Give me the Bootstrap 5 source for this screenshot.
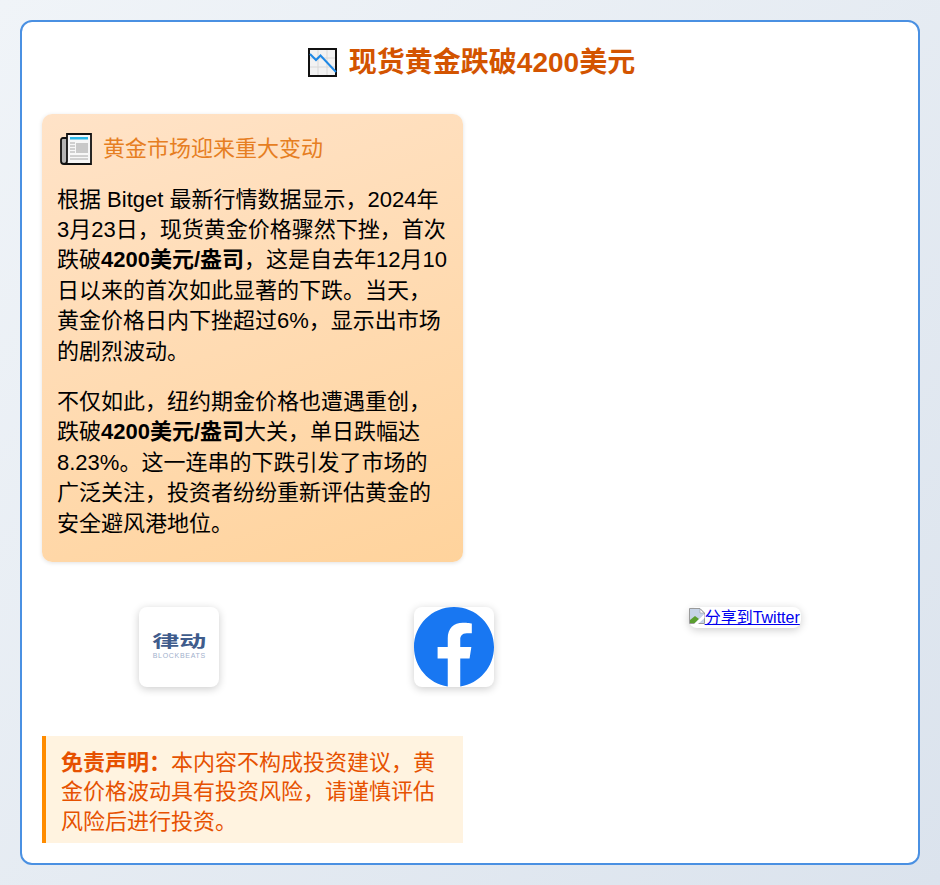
<!DOCTYPE html>
<html lang="zh-CN">
<head>
  <meta charset="UTF-8">
  <title>现货黄金跌破4200美元</title>
  <link href="https://cdn.jsdelivr.net/npm/bootstrap@5.3.3/dist/css/bootstrap.min.css" rel="stylesheet">
  <style>
    body {
      font-family: "Liberation Sans", "Noto Sans CJK SC", sans-serif;
      color: #000;
      min-height: 885px;
      padding: 20px;
      background: linear-gradient(135deg, #f0f4f8, #dbe3ed);
    }
    .news-box {
      border: 2px solid #4a90e2;
      border-radius: 12px;
      padding: 20px;
      height: 845px;
    }
    .news-title {
      font-size: 28px;
      font-weight: 700;
      line-height: 1.2;
      color: #d35400;
      margin: 4px 0 34px;
      padding-left: 3px;
      gap: 12px;
    }
    .info-panel {
      width: 421px;
      height: 448px;
      padding: 15px;
      border-radius: 10px;
      background: linear-gradient(160deg, #ffe3c8, #ffd39c);
      box-shadow: 0 1px 4px rgba(0, 0, 0, .12);
    }
    .panel-head {
      font-size: 22px;
      line-height: 1.2;
      color: #e67e22;
      gap: 11px;
      margin: 4px 0 20px 3px;
    }
    .panel-head span { padding-top: 2px; }
    .info-panel p {
      font-size: 22px;
      line-height: 30.4px;
      margin-bottom: 20px;
    }
    .logo-row { margin: 45px 0 49px; height: 80px; }
    .logo-tile {
      width: 80px;
      height: 80px;
      border-radius: 8px;
      background: #fff;
      box-shadow: 0 2px 8px rgba(0, 0, 0, .2);
      overflow: hidden;
    }
    .logo-cn {
      font-size: 27px;
      line-height: 17px;
      font-weight: 700;
      color: #3f5c8c;
      transform: scaleY(.6);
    }
    .logo-en {
      font-size: 7px;
      line-height: 8px;
      color: #9fb0cc;
      letter-spacing: .7px;
      margin-top: 2px;
    }
    .share-link {
      width: 112px;
      height: 21px;
      font-size: 16px;
      line-height: 22px;
      color: #00e;
      border-radius: 8px;
      background: #fff;
      box-shadow: 0 2px 8px rgba(0, 0, 0, .2);
      text-decoration: underline;
      white-space: nowrap;
    }
    .share-link svg { vertical-align: -1px; }
    .disclaimer {
      width: 421px;
      height: 107px;
      padding: 12px 14px 12px 15px;
      font-size: 22px;
      line-height: 29.5px;
      color: #e65100;
      background: #fff3e0;
      border-left: 4px solid #ff8c00;
    }
  </style>
  <script src="https://cdn.jsdelivr.net/npm/bootstrap@5.3.3/dist/js/bootstrap.bundle.min.js"></script>
</head>
<body>
  <div class="news-box bg-white">
    <h1 class="news-title d-flex justify-content-center align-items-center">
      <svg width="29" height="29" viewBox="0 0 29 29" aria-hidden="true">
        <rect x="1" y="1" width="27" height="27" fill="#f2f2f2" stroke="#111" stroke-width="2"/>
        <path d="M10 2v25M19 2v25M2 10h25M2 19h25" stroke="#d8d8d8" stroke-width="1"/>
        <path d="M2 6l6 6 4.500-4.500L28 24" fill="none" stroke="#1e88e5" stroke-width="2"/>
      </svg>
      <span>现货黄金跌破4200美元</span>
    </h1>

    <div class="info-panel">
      <h2 class="panel-head d-flex align-items-center fw-normal">
        <svg width="32" height="32" viewBox="0 0 32 32" aria-hidden="true">
          <path d="M6 5H3C1.800 5 1 6 1 7v21c0 2 1.500 3 3 3h26V5z" fill="#b5b5b5" stroke="#111" stroke-width="1.800"/>
          <path d="M7 1h24v30H4c2 0 3-1 3-3z" fill="#f7f7f7" stroke="#111" stroke-width="1.800"/>
          <rect x="10" y="4" width="18" height="2.500" fill="#29b6e8"/>
          <rect x="16" y="10" width="12" height="10" fill="#c9c9c9"/>
          <path d="M10 10h5M10 13h5M10 16h5M10 19h5M10 23h18M10 26h18" stroke="#a8a8a8" stroke-width="1"/>
        </svg>
        <span>黄金市场迎来重大变动</span>
      </h2>
      <p>根据 Bitget 最新行情数据显示，2024年3月23日，现货黄金价格骤然下挫，首次跌破<strong>4200美元/盎司</strong>，这是自去年12月10日以来的首次如此显著的下跌。当天，黄金价格日内下挫超过6%，显示出市场的剧烈波动。</p>
      <p>不仅如此，纽约期金价格也遭遇重创，跌破<strong>4200美元/盎司</strong>大关，单日跌幅达8.23%。这一连串的下跌引发了市场的广泛关注，投资者纷纷重新评估黄金的安全避风港地位。</p>
    </div>

    <div class="logo-row d-flex justify-content-around align-items-start">
      <div class="logo-tile d-flex flex-column align-items-center justify-content-center">
        <div class="logo-cn">律动</div>
        <div class="logo-en">BLOCKBEATS</div>
      </div>
      <div class="logo-tile">
        <svg width="80" height="80" viewBox="0 0 1024 1024" aria-label="Facebook">
          <path fill="#1877f2" d="M1024 512C1024 229.2 794.8 0 512 0S0 229.2 0 512c0 255.600 187.200 467.400 432 505.800V660H302V512h130V399.200C432 270.900 508.400 200 625.400 200c56 0 114.600 10 114.600 10v126h-64.600c-63.600 0-83.400 39.500-83.400 80v96h142l-22.700 148H592v357.800C836.800 979.400 1024 767.600 1024 512z"/>
        </svg>
      </div>
      <a class="share-link d-inline-block" href="#"><svg width="16" height="16" viewBox="0 0 16 16" aria-hidden="true">
          <path d="M.5.5h10.500l4.500 4.500v10.500H.5z" fill="#c5d3e6" stroke="#9a9a9a"/>
          <path d="M1 15v-3l5-4 4 3-4 4z" fill="#5a9e2f"/>
          <path d="M11 1v4h4z" fill="#fff" stroke="#9a9a9a" stroke-width=".6"/>
          <path d="M15.500 6L5 16h4l6.500-6z" fill="#fff"/>
        </svg>分享到Twitter</a>
    </div>

    <div class="disclaimer"><strong>免责声明：</strong>本内容不构成投资建议，黄金价格波动具有投资风险，请谨慎评估风险后进行投资。</div>
  </div>
</body>
</html>
